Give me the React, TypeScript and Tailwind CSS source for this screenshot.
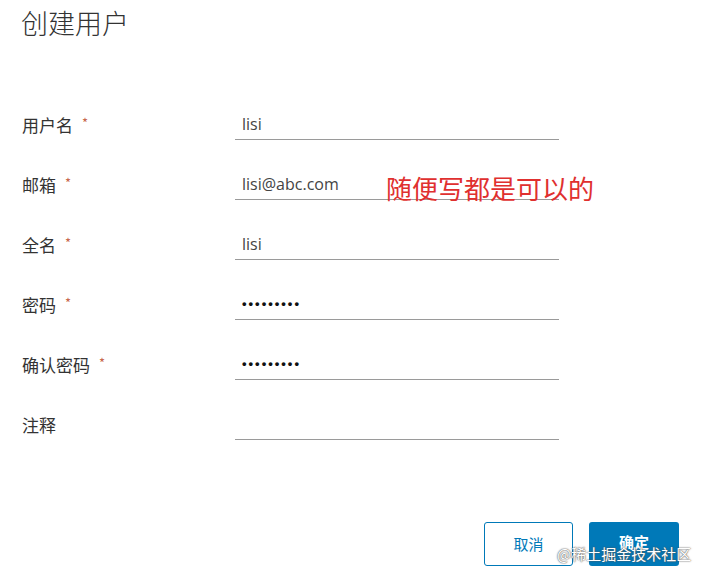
const font = 'font-["Noto_Sans_CJK_SC","Noto_Sans",sans-serif]'

type Field = { label: string; required: boolean; value: string; secret?: boolean }

const fields: Field[] = [
  { label: '用户名', required: true, value: 'lisi' },
  { label: '邮箱', required: true, value: 'lisi@abc.com' },
  { label: '全名', required: true, value: 'lisi' },
  { label: '密码', required: true, value: '•••••••••', secret: true },
  { label: '确认密码', required: true, value: '•••••••••', secret: true },
  { label: '注释', required: false, value: '' },
]

export default function App() {
  return (
    <div className={`relative h-[584px] w-[708px] overflow-hidden bg-white ${font}`}>
      {/* 标题 */}
      <h1 className="pl-[21px] pt-[6px] text-[27px] font-light leading-[34px] text-[#333]">创建用户</h1>

      {/* 表单 */}
      <div className="mt-[60px] flex flex-col">
        {fields.map((f) => (
          <div key={f.label} className="flex h-[60px] items-start">
            <div className="flex w-[235px] items-start pl-[22px] pt-[13px] text-[17px] leading-[24px] text-[#333]">
              {f.label}
              {f.required && <span className="ml-[9px] text-[13px] leading-[20px] text-[#c7654a]">*</span>}
            </div>
            <div className="flex h-[40px] w-[324px] items-end border-b border-[#9a9a9a] pb-[4px] pl-[7px]">
              {f.secret ? (
                <span className="font-['Liberation_Sans',sans-serif] text-[13px] font-bold leading-[22px] tracking-[2px] text-[#111]">
                  {f.value}
                </span>
              ) : (
                <span className="font-['Open_Sans','Noto_Sans',sans-serif] text-[16px] leading-[22px] text-[#444]">
                  {f.value}
                </span>
              )}
            </div>
          </div>
        ))}
      </div>

      {/* 批注 */}
      <div className="absolute left-[386px] top-[170px] text-[26px] leading-[36px] text-[#e0302f]">
        随便写都是可以的
      </div>

      {/* 按钮 */}
      <div className="absolute left-[484px] top-[522px] flex gap-[16px]">
        <button className="h-[44px] w-[89px] rounded-[3px] border border-[#0079b8] bg-white text-[15px] text-[#0079b8]">
          取消
        </button>
        <button className="h-[44px] w-[90px] rounded-[3px] bg-[#0079b8] pb-[4px] text-[15px] font-bold text-white">
          确定
        </button>
      </div>

      {/* 水印 */}
      <div className="absolute left-[557px] top-[543px] text-[15px] leading-[22px] text-white [text-shadow:0_0_1px_#555,0_0_2px_#555]">
        @稀土掘金技术社区
      </div>
    </div>
  )
}
